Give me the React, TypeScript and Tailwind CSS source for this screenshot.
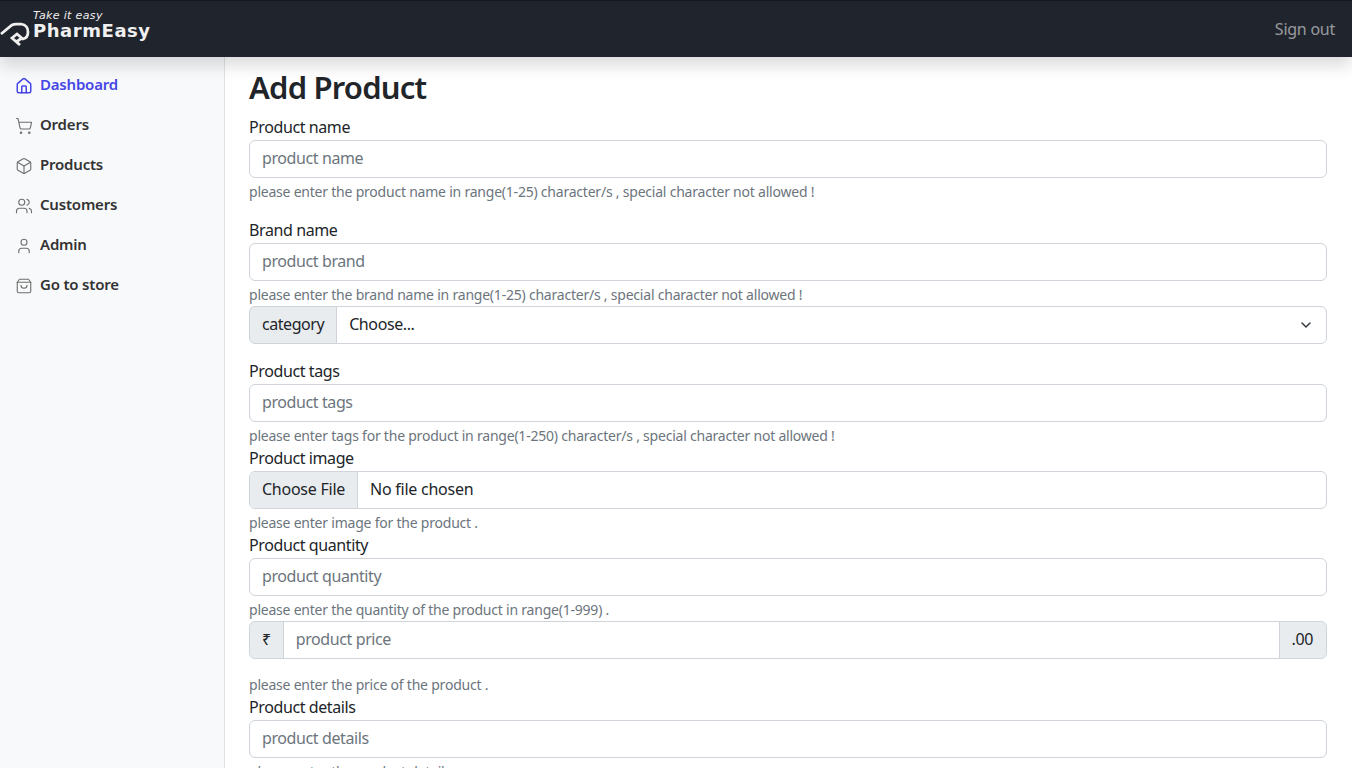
import { House, ShoppingCart, Box, Users, User, ChevronDown } from 'lucide-react'

const navItems = [
  { label: 'Dashboard', icon: House, active: true },
  { label: 'Orders', icon: ShoppingCart },
  { label: 'Products', icon: Box },
  { label: 'Customers', icon: Users },
  { label: 'Admin', icon: User },
  { label: 'Go to store', icon: StoreBag },
]

function StoreBag({ size = 16, strokeWidth = 1.5, className = '' }: { size?: number; strokeWidth?: number; className?: string }) {
  return (
    <svg width={size} height={size} viewBox="0 0 24 24" fill="none" stroke="currentColor" strokeWidth={strokeWidth} strokeLinecap="round" strokeLinejoin="round" className={className}>
      <path d="M6 3h12l3 4v12a2 2 0 0 1-2 2H5a2 2 0 0 1-2-2V7z" />
      <path d="M3 7h18" />
      <path d="M8 11a4 4 0 0 0 8 0" />
    </svg>
  )
}

function Logo() {
  return (
    <div className="flex flex-col w-[152px] pb-1 text-[#f0f0f0] font-['DejaVu_Sans',sans-serif]">
      <span className="ml-[33px] text-[11px] leading-[13px] italic tracking-[0.35px]">Take it easy</span>
      <div className="flex items-center h-6">
        <svg width="30" height="24" viewBox="0 21 30 24" fill="none" stroke="currentColor" strokeWidth="2.75" className="shrink-0">
          <path d="M1 33 L12 24 Q14 23 16 23 L21 23 Q28 24 28 31 Q28 37 23 38 L17 33 L12 37 L20 44" />
          <path d="M16 41 L22 37" />
        </svg>
        <span className="ml-[3px] -mt-[5px] text-[18px] leading-[20px] font-bold tracking-[0.55px]">PharmEasy</span>
      </div>
    </div>
  )
}

function Help({ text, top = true }: { text: string; top?: boolean }) {
  return <div className={`${top ? 'mt-1' : ''} h-[21px] text-[14px] leading-[19px] tracking-[-0.22px] text-[#6c757d]`}>{text}</div>
}

function Field({ label, placeholder, help }: { label: string; placeholder: string; help: string }) {
  return (
    <div>
      <label className="block h-6 text-[16px] leading-[22px] tracking-[-0.4px] text-[#212529]">{label}</label>
      <input
        placeholder={placeholder}
        className="block w-full h-[38px] pl-3 pr-3 pb-0.5 border border-[#ced4da] rounded-md bg-white text-[16px] tracking-[-0.4px] placeholder:text-[#6c757d] outline-none"
      />
      <Help text={help} />
    </div>
  )
}

export default function App() {
  return (
    <div className="h-screen overflow-hidden flex flex-col bg-white text-[#212529] font-['Noto_Sans',sans-serif]">
      <header className="relative z-10 h-[57px] shrink-0 flex items-center justify-between bg-[#20242d] border-t border-[#15181f] shadow-[0_8px_16px_rgba(0,0,0,0.15)]">
        <Logo />
        <a className="pr-[17px] text-[16px] tracking-[-0.25px] text-[#ffffff8c]">Sign out</a>
      </header>
      <div className="flex flex-1 min-h-0">
        <aside className="w-[225px] shrink-0 bg-[#f8f9fa] border-r border-[#dee2e6] pt-[7px]">
          <ul>
            {navItems.map((item) => (
              <li key={item.label} className={`flex items-center h-10 px-[15px] gap-[7px] text-[15px] tracking-[-0.2px] font-semibold ${item.active ? 'text-[#4646e5]' : 'text-[#333333]'}`}>
                <item.icon size={18} strokeWidth={item.active ? 2 : 1.5} className={item.active ? 'text-[#4646e5] mt-[3px]' : 'text-[#6f6f6f] mt-[3px]'} />
                {item.label}
              </li>
            ))}
          </ul>
        </aside>
        <main className="flex-1 min-w-0 pl-6 pr-[25px] pt-[11px]">
          <h1 className="text-[31px] leading-[38px] tracking-[-0.8px] font-semibold mb-[10px]">Add Product</h1>
          <div className="mb-4">
            <Field label="Product name" placeholder="product name" help="please enter the product name in range(1-25) character/s , special character not allowed !" />
          </div>
          <Field label="Brand name" placeholder="product brand" help="please enter the brand name in range(1-25) character/s , special character not allowed !" />
          <div className="flex h-[38px] mb-4 text-[16px] tracking-[-0.4px]">
            <span className="flex items-center pl-3 pr-3 pb-0.5 tracking-[-0.45px] bg-[#e9ecef] border border-[#ced4da] rounded-l-md">category</span>
            <div className="flex-1 flex items-center justify-between pl-3 pr-3 -ml-px border border-[#ced4da] rounded-r-md">
              <span className="pb-0.5">Choose...</span>
              <ChevronDown size={16} strokeWidth={2.25} className="text-[#343a40]" />
            </div>
          </div>
          <Field label="Product tags" placeholder="product tags" help="please enter tags for the product in range(1-250) character/s , special character not allowed !" />
          <label className="block h-6 text-[16px] leading-[22px] tracking-[-0.4px]">Product image</label>
          <div className="flex h-[38px] border border-[#ced4da] rounded-md overflow-hidden text-[16px] tracking-[-0.25px]">
            <span className="flex items-center pl-3 pr-3 pb-0.5 bg-[#e9ecef] border-r border-[#ced4da]">Choose File</span>
            <span className="flex items-center pl-3 pb-0.5">No file chosen</span>
          </div>
          <Help text="please enter image for the product ." />
          <Field label="Product quantity" placeholder="product quantity" help="please enter the quantity of the product in range(1-999) ." />
          <div className="flex h-[38px] mb-4 text-[16px] tracking-[-0.4px]">
            <span className="flex items-center px-3 pb-0.5 bg-[#e9ecef] border border-[#ced4da] rounded-l-md">₹</span>
            <input placeholder="product price" className="flex-1 min-w-0 pl-3 pr-3 pb-0.5 -ml-px border border-[#ced4da] placeholder:text-[#6c757d] outline-none" />
            <span className="flex items-center pl-3 pr-[13px] pb-0.5 -ml-px bg-[#e9ecef] border border-[#ced4da] rounded-r-md">.00</span>
          </div>
          <Help text="please enter the price of the product ." top={false} />
          <Field label="Product details" placeholder="product details" help="please enter the product details ." />
        </main>
      </div>
    </div>
  )
}
